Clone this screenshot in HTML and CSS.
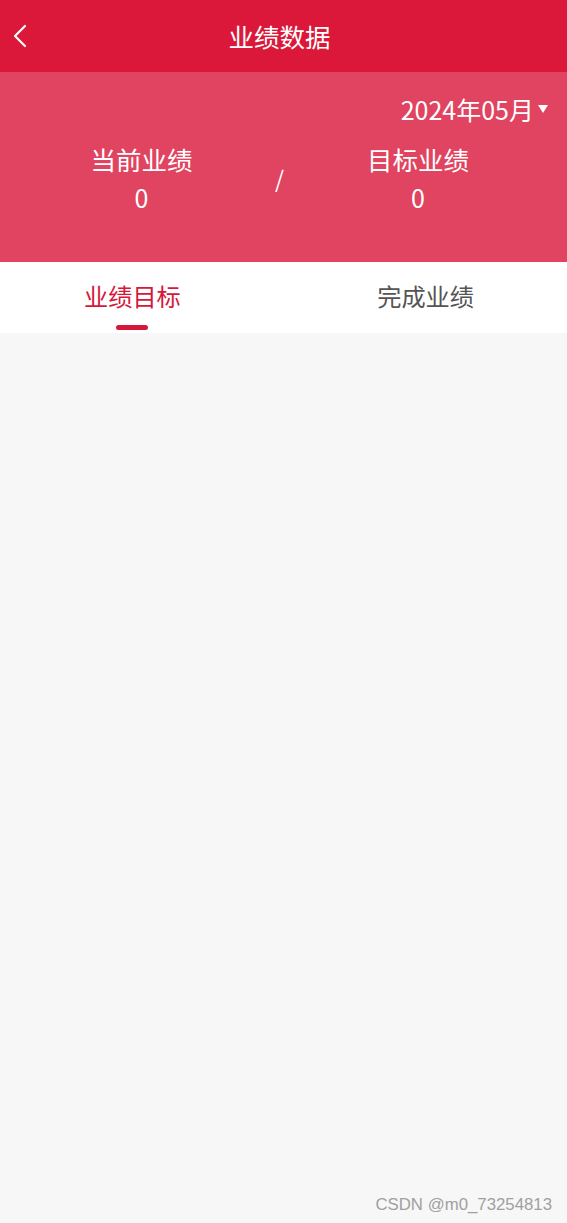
FILE: index.html
```html
<!DOCTYPE html>
<html lang="zh-CN">
<head>
  <meta charset="UTF-8" />
  <meta name="viewport" content="width=device-width, initial-scale=1.0" />
  <title>业绩数据</title>
  <link rel="stylesheet" href="styles.css">
</head>
<body>
  <div class="page">
    <header class="topbar">
      <span class="back">
        <svg width="16" height="24" viewBox="0 0 16 24">
          <path d="M13 2 L3 12 L13 22" fill="none" stroke="#fff" stroke-width="2.2" stroke-linecap="round" stroke-linejoin="round"/>
        </svg>
      </span>
      <h1>业绩数据</h1>
    </header>

    <section class="summary">
      <div class="month">2024年05月<span class="caret"></span></div>
      <div class="stats">
        <div class="stat first">
          <div class="label">当前业绩</div>
          <div class="value">0</div>
        </div>
        <div class="slash">/</div>
        <div class="stat">
          <div class="label">目标业绩</div>
          <div class="value">0</div>
        </div>
      </div>
    </section>

    <nav class="tabs">
      <div class="tab active">业绩目标</div>
      <div class="tab">完成业绩</div>
    </nav>

    <main class="content"></main>

    <div class="watermark">CSDN @m0_73254813</div>
  </div>
</body>
</html>
```

FILE: styles.css
```css
* {
  box-sizing: border-box;
}

body {
  margin: 0;
  font-family: "Noto Sans CJK SC", "Noto Sans", sans-serif;
  background: #f7f7f7;
  color: #fff;
}

.page {
  position: relative;
  min-height: 1223px;
  display: flex;
  flex-direction: column;
}

.topbar {
  height: 72px;
  background: #db1839;
  display: flex;
  align-items: center;
  justify-content: center;
  padding-right: 8px;
  position: relative;
}

.topbar h1 {
  margin: 0;
  font-size: 25.5px;
  font-weight: 400;
  line-height: 1;
}

.back {
  position: absolute;
  left: 12px;
  top: 24px;
  display: flex;
}

.summary {
  height: 190px;
  background: #e04460;
  padding: 20px 19px 0 0;
}

.month {
  display: flex;
  justify-content: flex-end;
  align-items: center;
  font-size: 25px;
  line-height: 34px;
}

.caret {
  width: 0;
  height: 0;
  margin-left: 4px;
  border-left: 5px solid transparent;
  border-right: 5px solid transparent;
  border-top: 8px solid #fff;
}

.stats {
  display: grid;
  grid-template-columns: 275px 8px 1fr;
  margin-top: 14px;
  margin-right: -5px;
}

.stat {
  text-align: center;
}

.stat.first {
  padding-left: 8px;
}

.label {
  font-size: 25.5px;
  line-height: 38px;
}

.value {
  font-size: 25px;
  line-height: 38px;
}

.slash {
  font-size: 23px;
  text-align: center;
  line-height: 76px;
}

.tabs {
  height: 71px;
  background: #fff;
  display: flex;
  justify-content: space-between;
  padding: 0 93px 0 84px;
}

.tab {
  position: relative;
  font-size: 24.2px;
  line-height: 68px;
  color: #555;
}

.tab.active {
  color: #d6173a;
}

.tab.active::after {
  content: "";
  position: absolute;
  left: 50%;
  top: 63px;
  width: 32px;
  height: 5px;
  margin-left: -16px;
  border-radius: 3px;
  background: #d6173a;
}

.content {
  flex: 1;
}

.watermark {
  position: absolute;
  right: 15px;
  bottom: 8px;
  font-family: "Liberation Sans", Arial, sans-serif;
  font-size: 16.8px;
  color: #a0a0a0;
}
```
